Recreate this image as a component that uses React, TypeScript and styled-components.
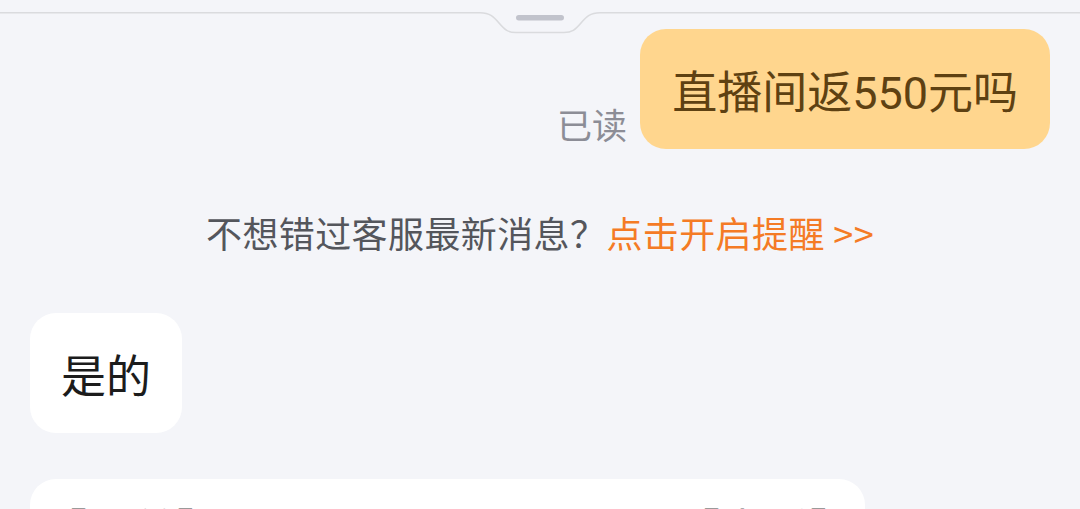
import React from "react";
import styled, { createGlobalStyle } from "styled-components";

const GlobalStyle = createGlobalStyle`
    html, body {
        margin: 0;
        padding: 0;
        background: #f4f5f9;
    }
    body {
        font-family: Roboto, "Noto Sans CJK SC", sans-serif;
        overflow: hidden;
    }
`;

/**
 * 顶部拖拽把手
 */
const Handle = () => (
    <HandleBar>
        <svg width="1080" height="36" viewBox="0 0 1080 36">
            <path
                d="M0 12.7 H480 C490 12.7 494 17 499 23 C505 30 508 32.5 516 32.5 H564 C572 32.5 575 30 581 23 C586 17 590 12.7 600 12.7 H1080"
                fill="none"
                stroke="#dadbde"
                strokeWidth="1.6"
            />
            <rect x="516" y="15" width="48" height="5.5" rx="2.75" fill="#c1c3cc" />
        </svg>
    </HandleBar>
);

const App = () => {
    return (
        <Page>
            <GlobalStyle />
            <Handle />
            <MineRow>
                <ReadTag>已读</ReadTag>
                <Bubble mine>直播间返550元吗</Bubble>
            </MineRow>
            <Notice>
                不想错过客服最新消息？<span className="link">点击开启提醒 &gt;&gt;</span>
            </Notice>
            <OtherRow>
                <Bubble>是的</Bubble>
            </OtherRow>
            <Card>
                <span>【订单】</span>
                <span>【查看】</span>
            </Card>
        </Page>
    );
};

const Page = styled.div`
    width: 1080px;
    height: 509px;
    overflow: hidden;
    display: flex;
    flex-direction: column;
    background: #f4f5f9;
`;

const HandleBar = styled.div`
    height: 29px;
    position: relative;
    z-index: 1;
    svg {
        display: block;
        overflow: visible;
    }
`;

const MineRow = styled.div`
    display: flex;
    justify-content: flex-end;
    align-items: flex-end;
    gap: 13px;
    padding-right: 30px;
`;

const ReadTag = styled.span`
    font-size: 35px;
    line-height: 50px;
    color: #8c8d96;
    margin-bottom: -4px;
`;

const Bubble = styled.div<{ mine?: boolean }>`
    box-sizing: border-box;
    height: 120px;
    display: flex;
    align-items: center;
    padding: 0 ${(p) => (p.mine ? "32px" : "31px")};
    border-radius: 26px;
    font-size: 45px;
    color: ${(p) => (p.mine ? "#5e4112" : "#1c1c1c")};
    background: ${(p) => (p.mine ? "#ffd68e" : "#ffffff")};
`;

const Notice = styled.div`
    margin-top: 58px;
    text-align: center;
    font-family: "Noto Sans CJK SC", sans-serif;
    font-size: 36px;
    letter-spacing: 0.4px;
    line-height: 50px;
    color: #54565c;
    .link {
        color: #f47b25;
    }
`;

const OtherRow = styled.div`
    display: flex;
    margin-top: 56px;
    padding-left: 30px;
`;

const Card = styled.div`
    box-sizing: border-box;
    margin: 46px 0 0 30px;
    width: 835px;
    height: 200px;
    flex-shrink: 0;
    border-radius: 26px;
    background: #fff;
    padding: 21px 10px 0 12px;
    display: flex;
    justify-content: space-between;
    font-size: 45px;
    line-height: 63px;
    color: #9a9a9a;
`;

export default App;
